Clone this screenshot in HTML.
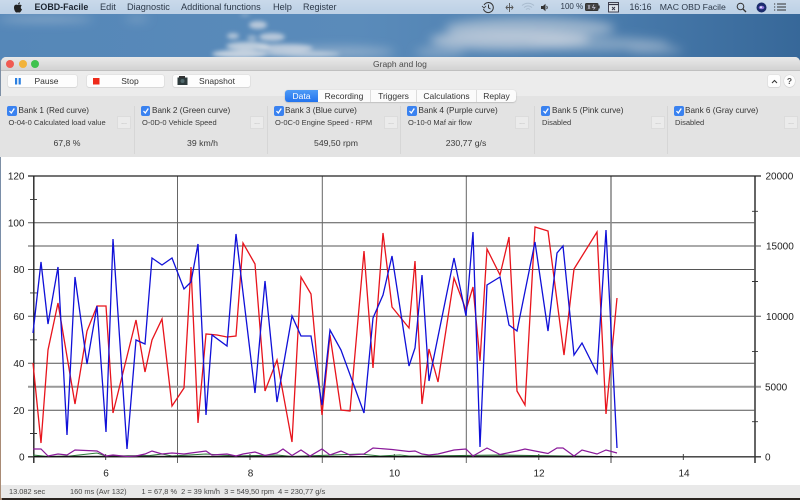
<!DOCTYPE html>
<html><head><meta charset="utf-8">
<style>
html,body{margin:0;padding:0;background:#2a2420;width:800px;height:500px;overflow:hidden}
*{box-sizing:border-box}
body{font-family:"Liberation Sans",sans-serif;color:#333}
#all{position:absolute;left:0;top:0;width:800px;height:500px;overflow:hidden;filter:blur(.35px)}
.a{position:absolute;white-space:nowrap;line-height:1}
#wall{position:absolute;left:0;top:0;width:800px;height:500px}
#menu{position:absolute;left:0;top:0;width:800px;height:14px;background:linear-gradient(#c9d9ea,#bcd0e5)}
#menu .a{top:2.5px;font-size:9.2px;color:#2c3848}
#win{position:absolute;left:1px;top:57px;width:799px;height:441px;background:#ececec;border-radius:5px 5px 4px 4px;overflow:hidden}
#title{position:absolute;left:0;top:0;width:799px;height:14px;background:linear-gradient(#e9e9e9,#d2d2d2);border-bottom:1px solid #c0c0c0}
.tl{position:absolute;top:3px;width:8px;height:8px;border-radius:50%}
.btn{position:absolute;top:75px;height:12px;background:#fdfdfd;border-radius:2px;box-shadow:0 0 1px #bbb,0 .5px 1px #ccc;font-size:8.5px;color:#333;line-height:12px;text-align:center}
#tabs{position:absolute;left:285px;top:90px;width:231px;height:12px;background:#fbfbfb;border-radius:3px;box-shadow:0 .5px 1.5px #aaa;z-index:3}
#tabs span{position:absolute;top:0;height:12px;line-height:12px;font-size:8.5px;text-align:center;color:#333;border-left:1px solid #ddd}
#panel{position:absolute;left:0;top:96px;width:800px;height:61px;background:#e3e3e3}
.sep{position:absolute;top:106px;width:1px;height:48px;background:#d6d6d6}
.cb{position:absolute;top:106px;width:9.5px;height:9.5px;border-radius:2px;background:#3a82f0}
.cb svg{position:absolute;left:0;top:0}
.bl{position:absolute;top:107px;font-size:8.2px;color:#333;line-height:1;white-space:nowrap}
.sub{position:absolute;top:118.5px;font-size:7.5px;color:#3b3b3b;line-height:1;white-space:nowrap}
.val{position:absolute;top:139px;font-size:8.7px;color:#3a3a3a;line-height:1;white-space:nowrap;transform:translateX(-50%)}
.dots{position:absolute;top:116px;width:14px;height:13px;background:#ebebeb;border:1px solid #dcdcdc;font-size:7px;color:#aaa;text-align:center;line-height:12px}
#chart{position:absolute;left:1px;top:157px;width:799px;height:328px;background:#fff}
#status{position:absolute;left:1px;top:485px;width:799px;height:13px;background:#e9e9e9}
#status .a{top:3px;font-size:7.4px;color:#444}
</style></head><body><div id="all">

<svg id="wall" viewBox="0 0 800 500">
<defs>
<linearGradient id="sky" x1="0" y1="0" x2="1" y2="0"><stop offset="0" stop-color="#5587b8"/><stop offset=".45" stop-color="#5a8bba"/><stop offset=".75" stop-color="#4a7cad"/><stop offset="1" stop-color="#376899"/></linearGradient>
<filter id="b1" x="-30%" y="-100%" width="160%" height="300%"><feGaussianBlur stdDeviation="5"/></filter>
<filter id="b2" x="-30%" y="-100%" width="160%" height="300%"><feGaussianBlur stdDeviation="2"/></filter>
</defs>
<rect width="800" height="60" fill="url(#sky)"/>
<rect y="60" width="800" height="110" fill="#7d8fa5"/>
<rect y="268" width="2" height="232" fill="#a98b75"/>
<rect y="170" width="2" height="100" fill="#7a8ea8"/>
<g filter="url(#b1)" fill="#c8d2de">
<ellipse cx="45" cy="19" rx="48" ry="3" opacity=".5"/>
<ellipse cx="137" cy="19" rx="12" ry="2" opacity=".45"/>
<ellipse cx="530" cy="28" rx="85" ry="11" opacity=".6"/>
<ellipse cx="510" cy="40" rx="80" ry="10" opacity=".75"/>
<ellipse cx="600" cy="44" rx="70" ry="7" opacity=".45"/>
<ellipse cx="655" cy="50" rx="28" ry="4" opacity=".4"/>
<ellipse cx="440" cy="52" rx="25" ry="5" opacity=".4"/>
<ellipse cx="340" cy="52" rx="55" ry="5" opacity=".5"/>
</g>
<g filter="url(#b2)" fill="#d8dee6">
<ellipse cx="258" cy="25" rx="9" ry="4" opacity=".75"/>
<ellipse cx="233" cy="36" rx="6" ry="3" opacity=".7"/>
<ellipse cx="272" cy="37" rx="13" ry="4" opacity=".75"/>
<ellipse cx="252" cy="38" rx="5" ry="3" opacity=".5"/>
<ellipse cx="248" cy="46" rx="22" ry="4" opacity=".8"/>
<ellipse cx="285" cy="48" rx="28" ry="4" opacity=".75"/>
<ellipse cx="240" cy="54" rx="28" ry="4" opacity=".85"/>
<ellipse cx="300" cy="54" rx="40" ry="3" opacity=".65"/>
<ellipse cx="245" cy="15" rx="5" ry="1.500" opacity=".4"/>
</g>
</svg>

<div id="menu">
<svg class="a" style="left:13px;top:2px" width="10" height="11" viewBox="0 0 10 11"><path d="M5 3C4 2.400 3 2.500 2 3 .6 4 .7 7 2.200 9.500 3 10.800 3.800 10.700 5 10.200 6.200 10.700 7 10.800 7.800 9.500 8.400 8.700 8.800 8 9 7.300 7.500 6.700 7.400 4.300 8.800 3.600 8 2.500 6.300 2.300 5 3ZM5 2.500C5 1.500 5.800.500 7 .3 7.100 1.500 6.200 2.500 5 2.500Z" fill="#222"/></svg>
<span class="a" style="left:34.500px;font-weight:bold;color:#1d2530;font-size:8.9px">EOBD-Facile</span>
<span class="a" style="left:100px">Edit</span>
<span class="a" style="left:127px">Diagnostic</span>
<span class="a" style="left:181px">Additional functions</span>
<span class="a" style="left:273px">Help</span>
<span class="a" style="left:303px;font-size:9px">Register</span>
<svg class="a" style="left:481px;top:1px" width="14" height="13" viewBox="0 0 14 13" fill="none" stroke="#333" stroke-width="1"><path d="M3 4A5 5 0 1 1 2.500 8"/><path d="M1 5L3 7 5 5" stroke-width=".8"/><path d="M7.500 3.500V6.800L9.500 8"/></svg>
<svg class="a" style="left:505px;top:2px" width="9" height="11" viewBox="0 0 9 11" fill="none" stroke="#555" stroke-width=".9"><path d="M4.500 1V10M1 5.500H8M2.500 3.500L1 5.500 2.500 7.500M6.500 3.500L8 5.500 6.500 7.500"/></svg>
<svg class="a" style="left:521px;top:2px" width="14" height="10" viewBox="0 0 14 10" fill="none" stroke="#a9bbce" stroke-width="1"><path d="M1 3.500C4.500.5 9.500.5 13 3.500M3 5.500C5.500 3.500 8.500 3.500 11 5.500M5 7.500C6.200 6.500 7.800 6.500 9 7.500"/></svg>
<svg class="a" style="left:541px;top:3px" width="9" height="9" viewBox="0 0 9 9"><path d="M0 3H2L4.500 .8V8.200L2 6H0Z" fill="#333"/><path d="M5.500 3C6.500 3.700 6.500 5.300 5.500 6" stroke="#333" fill="none"/></svg>
<span class="a" style="left:560.500px;font-size:8px;top:3px;color:#2c3848">100 %</span>
<svg class="a" style="left:585px;top:3px" width="15" height="8" viewBox="0 0 15 8"><rect x=".5" y=".5" width="12.500" height="7" rx="1" fill="#444" stroke="#333"/><rect x="13.500" y="2.500" width="1.200" height="3" fill="#333"/><path d="M3 2L5 6M5 2L3 6M9 1.500L7.500 4.500H10L8.500 6.500" stroke="#ccd" stroke-width=".7" fill="none"/></svg>
<svg class="a" style="left:608px;top:2px" width="11" height="11" viewBox="0 0 11 11" fill="none" stroke="#334" stroke-width=".9"><rect x=".5" y=".5" width="10" height="9.500" fill="#dfe5ec"/><path d="M.5 2.500H10.500" stroke-width="1.200"/><path d="M4 5L7 8M7 5L4 8"/></svg>
<span class="a" style="left:629.500px;font-size:8.800px">16:16</span>
<span class="a" style="left:659.700px;font-size:8.700px">MAC OBD Facile</span>
<svg class="a" style="left:736px;top:2px" width="11" height="11" viewBox="0 0 11 11" fill="none" stroke="#333" stroke-width="1"><circle cx="4.500" cy="4.500" r="3.300"/><path d="M7 7L10 10" stroke-width="1.300"/></svg>
<svg class="a" style="left:756px;top:2px" width="11" height="11" viewBox="0 0 11 11"><circle cx="5.500" cy="5.500" r="5" fill="#1b2c6c"/><ellipse cx="5.500" cy="5.500" rx="2.800" ry="1.800" fill="#8a6fd8"/><circle cx="5" cy="5.200" r="1" fill="#e8eeff"/></svg>
<svg class="a" style="left:774px;top:3px" width="12" height="8" viewBox="0 0 12 8" stroke="#333" stroke-width=".9"><path d="M3 1H12M3 4H12M3 7H12"/><path d="M0 1H1.200M0 4H1.200M0 7H1.200"/></svg>
</div>

<div id="win">
<div id="title">
<div class="tl" style="left:5px;background:#f05a52"></div>
<div class="tl" style="left:18px;background:#f2b33a"></div>
<div class="tl" style="left:30px;background:#3fc24e"></div>
<span class="a" style="left:372px;top:3px;font-size:8.500px;color:#4a4a4a">Graph and log</span>
</div>
</div>

<div class="btn" style="left:8px;width:69px;padding-left:8px"><svg class="a" style="left:6px;top:2px" width="8" height="8"><rect x="1" y="1" width="2.200" height="6.500" fill="#2a7fe0"/><rect x="4.600" y="1" width="2.200" height="6.500" fill="#2a7fe0"/></svg>Pause</div>
<div class="btn" style="left:87px;width:77px;padding-left:9px"><svg class="a" style="left:5px;top:2px" width="8" height="8"><rect x="1" y="1" width="6.500" height="6.500" fill="#ee2a1a"/></svg>Stop</div>
<div class="btn" style="left:173px;width:77px;padding-left:11px"><svg class="a" style="left:4px;top:1px" width="11" height="10"><rect x=".5" y="1.500" width="10" height="7.500" fill="#2d3a3c"/><rect x="2" y="0" width="6" height="2" fill="#333"/><circle cx="5.500" cy="5" r="2" fill="#50696d"/></svg>Snapshot</div>
<div class="btn" style="left:768px;width:12px;font-size:9px"><svg class="a" style="left:2.500px;top:3.500px" width="7" height="5" fill="none" stroke="#333"><path d="M1 4L3.500 1.500 6 4"/></svg></div>
<div class="btn" style="left:784px;width:11px;border-radius:50%;font-weight:bold;color:#555">?</div>

<div id="panel"></div>
<div id="tabs">
<span style="left:0;width:33px;background:linear-gradient(#4e9bf6,#2273ee);color:#fff;border:0;border-radius:3px 0 0 3px">Data</span>
<span style="left:33px;width:52px;border:0">Recording</span>
<span style="left:85px;width:46px">Triggers</span>
<span style="left:131px;width:60px">Calculations</span>
<span style="left:191px;width:40px">Replay</span>
</div>

<div class="sep" style="left:134px"></div><div class="sep" style="left:267px"></div><div class="sep" style="left:400px"></div><div class="sep" style="left:534px"></div><div class="sep" style="left:667px"></div>

<div class="cb" style="left:7px"><svg width="10" height="10" fill="none" stroke="#fff" stroke-width="1.300"><path d="M2.500 5L4.300 7 7.300 2.500"/></svg></div>
<div class="cb" style="left:140.500px"><svg width="10" height="10" fill="none" stroke="#fff" stroke-width="1.300"><path d="M2.500 5L4.300 7 7.300 2.500"/></svg></div>
<div class="cb" style="left:274px"><svg width="10" height="10" fill="none" stroke="#fff" stroke-width="1.300"><path d="M2.500 5L4.300 7 7.300 2.500"/></svg></div>
<div class="cb" style="left:407px"><svg width="10" height="10" fill="none" stroke="#fff" stroke-width="1.300"><path d="M2.500 5L4.300 7 7.300 2.500"/></svg></div>
<div class="cb" style="left:540.500px"><svg width="10" height="10" fill="none" stroke="#fff" stroke-width="1.300"><path d="M2.500 5L4.300 7 7.300 2.500"/></svg></div>
<div class="cb" style="left:674px"><svg width="10" height="10" fill="none" stroke="#fff" stroke-width="1.300"><path d="M2.500 5L4.300 7 7.300 2.500"/></svg></div>

<div class="bl" style="left:18.500px">Bank 1 (Red curve)</div>
<div class="bl" style="left:152px">Bank 2 (Green curve)</div>
<div class="bl" style="left:285px">Bank 3 (Blue curve)</div>
<div class="bl" style="left:418.500px">Bank 4 (Purple curve)</div>
<div class="bl" style="left:552px">Bank 5 (Pink curve)</div>
<div class="bl" style="left:685px">Bank 6 (Gray curve)</div>

<div class="sub" style="left:8.500px">O-04-0 Calculated load value</div>
<div class="sub" style="left:142px">O-0D-0 Vehicle Speed</div>
<div class="sub" style="left:275px">O-0C-0 Engine Speed - RPM</div>
<div class="sub" style="left:408px">O-10-0 Maf air flow</div>
<div class="sub" style="left:542px">Disabled</div>
<div class="sub" style="left:675px">Disabled</div>

<div class="val" style="left:67px">67,8 %</div>
<div class="val" style="left:202.500px">39 km/h</div>
<div class="val" style="left:336px">549,50 rpm</div>
<div class="val" style="left:466px">230,77 g/s</div>

<div class="dots" style="left:117px">...</div><div class="dots" style="left:250px">...</div><div class="dots" style="left:384px">...</div><div class="dots" style="left:515px">...</div><div class="dots" style="left:651px">...</div><div class="dots" style="left:784px">...</div>

<div id="chart"></div>
<svg class="a" style="left:0;top:0;z-index:2" width="800" height="500" viewBox="0 0 800 500">
<g fill="none">
<g stroke="#555" stroke-width="1">
<path d="M28 222.700H755M28 269.500H755M28 316.300H761M28 363.300H755M28 410.300H755"/>
<path d="M177.500 176V463M322.300 176V463M466.300 176V463" stroke="#666"/>
</g>
<path d="M28 246H761" stroke="#777" stroke-width="1.200"/>
<path d="M28 386.800H761" stroke="#999" stroke-width="2"/>
<path d="M611 176V463" stroke="#8a8a8a" stroke-width="1.600"/>
<path d="M755 176V463" stroke="#555" stroke-width="1.800"/>
<path d="M33.800 176V463" stroke="#222" stroke-width="1.400"/>
<path d="M28 176H761" stroke="#222" stroke-width="1.200"/>
<path d="M28 456.800H761" stroke="#333" stroke-width="1.400"/>
<path d="M30 199.400H37M30 292.900H37M30 339.800H37M30 433.500H37M752 211.300H758M752 281.500H758M752 351.600H758M752 421.700H758M105.700 454V460M250 454V460M394.300 454V460M538.800 454V460M683.300 454V460" stroke="#333" stroke-width=".9"/>
<path d="M33 455L48 456.500 70 456 97 453 106 456 150 455.500 162 454 172 456 206 454 236 456 277 455 292 456.500 360 454 380 456 400 455 409 456 422 456 500 455 600 456.500" stroke="#2d7a3a" stroke-width="1"/>
<path d="M34 456.500L120 456.300 200 456.400 300 456.400 400 456.500 500 456.300 613 456.500" stroke="#111" stroke-width="1"/>
<path stroke="#8a1a9a" stroke-width="1.200" d="M33 449L41 449 48 456 58 454 67 455 75 450 97 451 106 456 113 455 127 456.500 136 456 145 454 152 451 162 454 172 453 184 454 191 453 206 451 212 455 227 454 236 456 243 454 255 452 265 455.500 277 453 283 449 292 455.500 301 450 310 456 322 449 330 455 341 451 350 455 364 454 373 448 392 449.500 409 451.500 415 451 422 454 429 455 438 454 454 450 466 449 473 456 487 448 500 454.500 517 451 525 449 535 451 548 453.500 557 448 563 448 574 456 582 450 597 454 606 450 617 453"/>
<path stroke="#e8141c" stroke-width="1.300" stroke-linejoin="miter" d="M33 363L41 443 48 350 58 303 75 404 87 331 97 306 106 306 113 413 136 320 145 372 152 340 162 319 172 406 184 388 191 267 198 423 206 334 217 335 227 337 236 336 243 243 255 264 265 391 277 360 292 442 301 277 311 294 322 415 330 335 341 410 350 411 364 251 373 368 383 233 392 307 409 328 415 261 422 404 429 349 438 382 454 278 466 310 473 287 480 361 487 249 500 275 509 237 517 391 525 405 535 227 548 231 564 355 574 269 597 232 606 414 617 298"/>
<path stroke="#1010d8" stroke-width="1.300" stroke-linejoin="miter" d="M33 333L41 262 48 324 58 267 67 435 75 277 87 364 97 306 106 432 113 239 127 449 136 340 145 344 152 258 162 265 172 258 184 289 191 282 198 244 206 415 212 335 227 346 236 234 255 393 265 281 277 402 292 316 301 336 311 336 322 405 330 330 341 350 364 413 373 318 383 295 392 256 409 366 415 348 422 275 429 381 454 258 466 316 473 232 480 447 487 285 500 277 509 325 517 331 535 242 548 331 557 253 563 246 574 355 582 343 597 373 606 230 617 448"/>
</g>
<g font-family="Liberation Sans" font-size="10" fill="#222">
<g text-anchor="end">
<text x="24.500" y="179.500">120</text><text x="24.500" y="226.300">100</text><text x="24.500" y="273">80</text><text x="24.500" y="320">60</text><text x="24.500" y="367">40</text><text x="24.500" y="414">20</text><text x="24.500" y="460.500">0</text>
</g>
<text x="765.500" y="179.500">20000</text><text x="766" y="249.500">15000</text><text x="766" y="320">10000</text><text x="765" y="390.500">5000</text><text x="765" y="460.500">0</text>
<g text-anchor="middle">
<text x="106" y="476.500">6</text><text x="250.500" y="476.500">8</text><text x="394.500" y="476.500">10</text><text x="539" y="476.500">12</text><text x="684" y="476.500">14</text>
</g>
</g>
</svg>

<div id="status">
<span class="a" style="left:8px">13.082 sec</span>
<span class="a" style="left:69px">160 ms (Avr 132)</span>
<span class="a" style="left:140.500px">1 = 67,8 %&nbsp; 2 = 39 km/h&nbsp; 3 = 549,50 rpm&nbsp; 4 = 230,77 g/s</span>
</div>

</div></body></html>
